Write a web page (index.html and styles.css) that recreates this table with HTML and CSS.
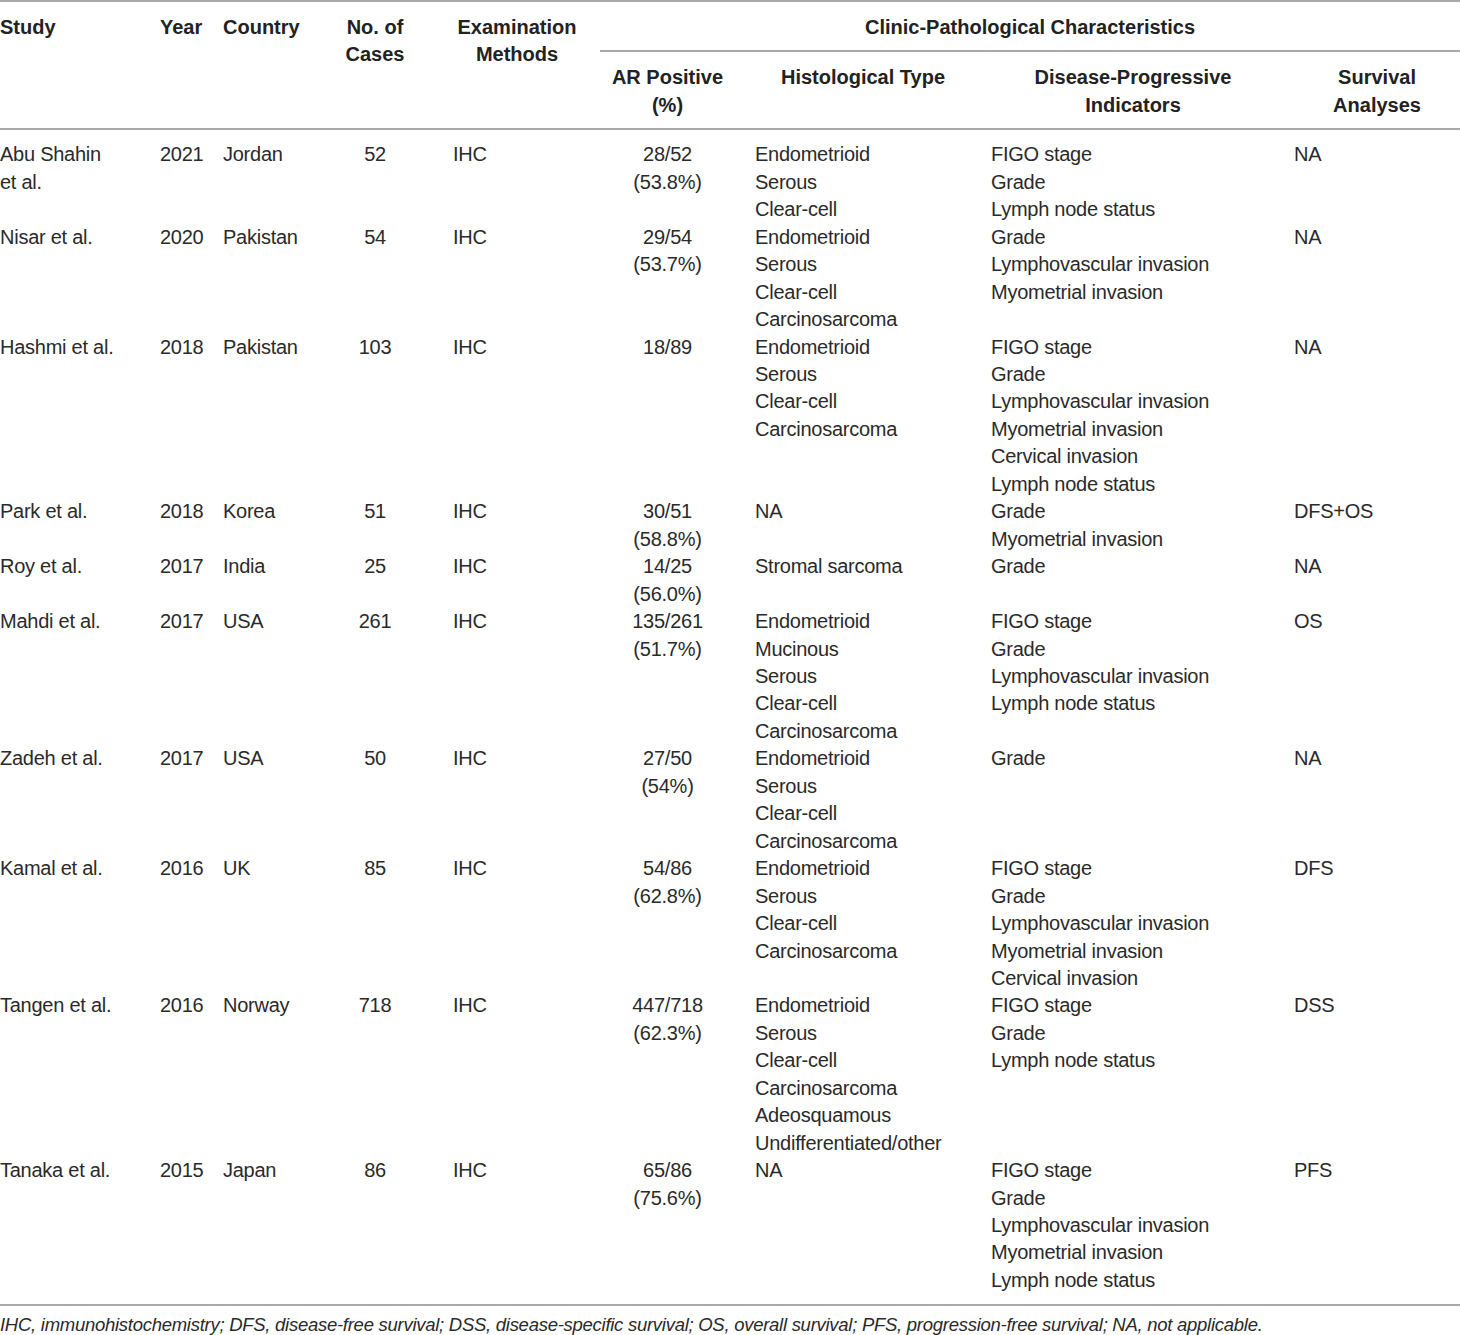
FILE: index.html
```html
<!DOCTYPE html>
<html>
<head>
<meta charset="utf-8">
<link rel="stylesheet" href="styles.css">
</head>
<body>
<div class="wrap">
<table class="tbl">
  <colgroup>
    <col class="c-study"><col class="c-year"><col class="c-country"><col class="c-cases"><col class="c-exam"><col class="c-ar"><col class="c-hist"><col class="c-dis"><col class="c-surv">
  </colgroup>
  <thead>
    <tr class="h1">
      <th rowspan="2" class="left">Study</th>
      <th rowspan="2" class="left yr">Year</th>
      <th rowspan="2" class="left">Country</th>
      <th rowspan="2" class="center">No. of<br>Cases</th>
      <th rowspan="2" class="center exam-h">Examination<br>Methods</th>
      <th colspan="4" class="center group">Clinic-Pathological Characteristics</th>
    </tr>
    <tr class="h2">
      <th class="center">AR Positive<br>(%)</th>
      <th class="center hist-h">Histological Type</th>
      <th class="center dis-h">Disease-Progressive<br>Indicators</th>
      <th class="center surv-h">Survival<br>Analyses</th>
    </tr>
  </thead>
  <tbody>
    <tr class="first">
      <td>Abu Shahin<br>et al.</td><td>2021</td><td>Jordan</td><td class="center">52</td><td class="exam">IHC</td><td class="center">28/52<br>(53.8%)</td>
      <td class="hist">Endometrioid<br>Serous<br>Clear-cell</td><td class="dis">FIGO stage<br>Grade<br>Lymph node status</td><td class="surv">NA</td>
    </tr>
    <tr>
      <td>Nisar et al.</td><td>2020</td><td>Pakistan</td><td class="center">54</td><td class="exam">IHC</td><td class="center">29/54<br>(53.7%)</td>
      <td class="hist">Endometrioid<br>Serous<br>Clear-cell<br>Carcinosarcoma</td><td class="dis">Grade<br>Lymphovascular invasion<br>Myometrial invasion</td><td class="surv">NA</td>
    </tr>
    <tr>
      <td>Hashmi et al.</td><td>2018</td><td>Pakistan</td><td class="center">103</td><td class="exam">IHC</td><td class="center">18/89</td>
      <td class="hist">Endometrioid<br>Serous<br>Clear-cell<br>Carcinosarcoma</td><td class="dis">FIGO stage<br>Grade<br>Lymphovascular invasion<br>Myometrial invasion<br>Cervical invasion<br>Lymph node status</td><td class="surv">NA</td>
    </tr>
    <tr>
      <td>Park et al.</td><td>2018</td><td>Korea</td><td class="center">51</td><td class="exam">IHC</td><td class="center">30/51<br>(58.8%)</td>
      <td class="hist">NA</td><td class="dis">Grade<br>Myometrial invasion</td><td class="surv">DFS+OS</td>
    </tr>
    <tr>
      <td>Roy et al.</td><td>2017</td><td>India</td><td class="center">25</td><td class="exam">IHC</td><td class="center">14/25<br>(56.0%)</td>
      <td class="hist">Stromal sarcoma</td><td class="dis">Grade</td><td class="surv">NA</td>
    </tr>
    <tr>
      <td>Mahdi et al.</td><td>2017</td><td>USA</td><td class="center">261</td><td class="exam">IHC</td><td class="center">135/261<br>(51.7%)</td>
      <td class="hist">Endometrioid<br>Mucinous<br>Serous<br>Clear-cell<br>Carcinosarcoma</td><td class="dis">FIGO stage<br>Grade<br>Lymphovascular invasion<br>Lymph node status</td><td class="surv">OS</td>
    </tr>
    <tr>
      <td>Zadeh et al.</td><td>2017</td><td>USA</td><td class="center">50</td><td class="exam">IHC</td><td class="center">27/50<br>(54%)</td>
      <td class="hist">Endometrioid<br>Serous<br>Clear-cell<br>Carcinosarcoma</td><td class="dis">Grade</td><td class="surv">NA</td>
    </tr>
    <tr>
      <td>Kamal et al.</td><td>2016</td><td>UK</td><td class="center">85</td><td class="exam">IHC</td><td class="center">54/86<br>(62.8%)</td>
      <td class="hist">Endometrioid<br>Serous<br>Clear-cell<br>Carcinosarcoma</td><td class="dis">FIGO stage<br>Grade<br>Lymphovascular invasion<br>Myometrial invasion<br>Cervical invasion</td><td class="surv">DFS</td>
    </tr>
    <tr>
      <td>Tangen et al.</td><td>2016</td><td>Norway</td><td class="center">718</td><td class="exam">IHC</td><td class="center">447/718<br>(62.3%)</td>
      <td class="hist">Endometrioid<br>Serous<br>Clear-cell<br>Carcinosarcoma<br>Adeosquamous<br>Undifferentiated/other</td><td class="dis">FIGO stage<br>Grade<br>Lymph node status</td><td class="surv">DSS</td>
    </tr>
    <tr class="last">
      <td>Tanaka et al.</td><td>2015</td><td>Japan</td><td class="center">86</td><td class="exam">IHC</td><td class="center">65/86<br>(75.6%)</td>
      <td class="hist">NA</td><td class="dis">FIGO stage<br>Grade<br>Lymphovascular invasion<br>Myometrial invasion<br>Lymph node status</td><td class="surv">PFS</td>
    </tr>
  </tbody>
</table>
<p class="note">IHC, immunohistochemistry; DFS, disease-free survival; DSS, disease-specific survival; OS, overall survival; PFS, progression-free survival; NA, not applicable.</p>
</div>
</body>
</html>
```
FILE: styles.css
```css
html, body {
  margin: 0;
  padding: 0;
  background: #ffffff;
}

.wrap {
  width: 1460px;
  font-family: "Liberation Sans", Arial, sans-serif;
  color: #2a2a2a;
}

.tbl {
  width: 1460px;
  table-layout: fixed;
  border-collapse: collapse;
  border-top: 2px solid #a8a8a8;
  border-bottom: 2px solid #a8a8a8;
  font-size: 20px;
  letter-spacing: -0.25px;
  line-height: 27.45px;
}

.c-study { width: 160px; }
.c-year { width: 63px; }
.c-country { width: 112px; }
.c-cases { width: 80px; }
.c-exam { width: 185px; }
.c-ar { width: 135px; }
.c-hist { width: 240px; }
.c-dis { width: 305px; }
.c-surv { width: 180px; }

.tbl th {
  font-weight: bold;
  color: #222;
  letter-spacing: 0;
  vertical-align: top;
  padding: 12px 0 9px 0;
  white-space: nowrap;
}

.tbl thead tr.h2 th,
.tbl thead tr.h1 th[rowspan] {
  border-bottom: 2px solid #a8a8a8;
}

.tbl th.group {
  border-bottom: 2px solid #a8a8a8;
}

.left { text-align: left; }
.center { text-align: center; }

.tbl th.exam-h { padding-left: 38px; padding-right: 19px; }
.tbl th.hist-h { padding-left: 20px; padding-right: 4px; }
.tbl th.dis-h { padding-left: 16px; padding-right: 5px; }
.tbl th.surv-h { padding-left: 14px; padding-right: 0; }

.tbl td {
  vertical-align: top;
  padding: 0;
  font-weight: normal;
  white-space: nowrap;
}

.tbl tr.first td { padding-top: 11px; }
.tbl tr.last td { padding-bottom: 10px; }

.tbl td.exam { padding-left: 38px; }
.tbl td.hist { padding-left: 20px; }
.tbl td.dis { padding-left: 16px; }
.tbl td.surv { padding-left: 14px; }

.note {
  margin: 0;
  padding-top: 9px;
  font-style: italic;
  font-size: 18.5px;
  letter-spacing: -0.27px;
  line-height: 20px;
  color: #2a2a2a;
  white-space: nowrap;
}
```
